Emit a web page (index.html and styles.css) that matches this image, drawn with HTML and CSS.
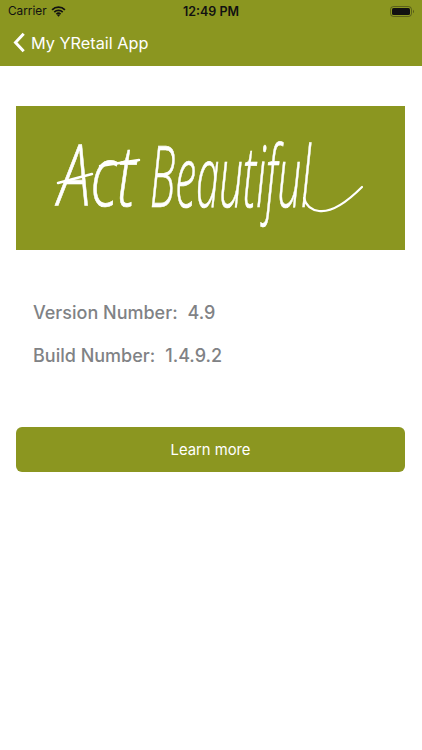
FILE: index.html
```html
<!DOCTYPE html>
<html lang="en">
<head>
<meta charset="utf-8">
<title>About</title>
<link rel="stylesheet" href="styles.css">
</head>
<body>
<header class="bar">
  <div class="status">
    <div class="status-left">
      <span>Carrier</span>
      <svg class="wifi" viewBox="0 0 16 12" aria-hidden="true">
        <path d="M1 4.200a10 10 0 0 1 14 0M3.400 6.700a6.600 6.600 0 0 1 9.200 0M5.700 9a3.300 3.300 0 0 1 4.600 0" fill="none" stroke="#111" stroke-width="1.900"/>
        <path d="M6.500 10 8 11.600 9.500 10a2 2 0 0 0-3 0z" fill="#111"/>
      </svg>
    </div>
    <div class="time">12:49 PM</div>
    <div class="status-right">
      <svg class="battery" viewBox="0 0 24 11" aria-hidden="true">
        <rect x="0.500" y="0.500" width="21" height="10" rx="3" fill="none" stroke="#111" stroke-opacity=".4"/>
        <rect x="2" y="2" width="18" height="7" rx="1.600" fill="#111"/>
        <path d="M23 3.800c.7.3 1 .9 1 1.700s-.3 1.400-1 1.700z" fill="#111" fill-opacity=".45"/>
      </svg>
    </div>
  </div>
  <nav class="nav">
    <svg class="chevron" viewBox="0 0 14 22" aria-hidden="true">
      <path d="M11.500 1.500 2.700 11l8.800 9.500" fill="none" stroke="#fff" stroke-width="3.200"/>
    </svg>
    <span class="nav-title">My YRetail App</span>
  </nav>
</header>
<main class="content">
  <svg class="logo" viewBox="16 106 389 144" role="img" aria-label="Act Beautiful">
    <rect x="16" y="106" width="389" height="144" fill="#8b9620"/>
    <g class="script">
      <text class="word-act" transform="translate(58 206) scale(.7 1)">Act</text>
      <text class="word-beautiful" transform="translate(150 207) scale(.5 1)">Beautiful</text>
    </g>
    <path class="flourish" d="M304 198c2 8 8 12 15 13 15 2 31-12 43-24"/>
    <path class="flourish thin" d="M58 183 92 174M139 160 100 166"/>
  </svg>
  <section class="info">
    <p class="info-row"><span>Version Number:</span><span>4.9</span></p>
    <p class="info-row"><span>Build Number:</span><span>1.4.9.2</span></p>
  </section>
  <button class="action" type="button">Learn more</button>
</main>
</body>
</html>
```
FILE: styles.css
```css
* { box-sizing: border-box; }
html, body { margin: 0; padding: 0; background: #fff; }
body { width: 422px; height: 750px; overflow: hidden; font-family: Inter, "Liberation Sans", sans-serif; }

.bar { background: #8b9620; height: 66px; color: #fff; }

.status {
  height: 21px;
  padding: 1px 8px 0;
  display: grid;
  grid-template-columns: 1fr auto 1fr;
  align-items: center;
  color: #111;
  font-size: 11.800px;
}
.status-left { display: flex; align-items: center; gap: 4px; }
.status-right { display: flex; justify-content: flex-end; }
.time { font-weight: 600; font-size: 12.500px; }
.wifi { width: 15px; height: 11px; display: block; }
.battery { width: 24px; height: 11px; display: block; }

.nav { height: 45px; padding: 0 0 2px 13px; display: flex; align-items: center; gap: 5px; }
.chevron { width: 13px; height: 21px; display: block; }
.nav-title { font-size: 16.300px; }

.content { padding: 40px 17px 0 16px; }
.logo { display: block; width: 389px; height: 144px; }

.script text {
  fill: #fff;
  stroke: #fff;
  stroke-width: 0.700px;
  font-family: "Open Sans", "Liberation Sans", sans-serif;
  font-style: italic;
  font-weight: 300;
}
.word-act { font-size: 84px; }
.word-beautiful { font-size: 84px; }
.flourish { fill: none; stroke: #fff; stroke-width: 2.200; stroke-linecap: round; }
.thin { stroke-width: 2.500; }

.info { padding: 52px 0 0 17px; color: #808285; font-size: 18px; font-weight: 500; }
.info-row { margin: 0 0 20.500px; height: 22px; line-height: 22px; display: flex; gap: 10px; }

.action {
  display: block;
  width: 389px;
  height: 45px;
  margin-top: 60px;
  padding: 1px 0 0;
  border: 0;
  border-radius: 6px;
  background: #8b9620;
  color: #fff;
  font: 400 14.800px Inter, "Liberation Sans", sans-serif;
}
```
